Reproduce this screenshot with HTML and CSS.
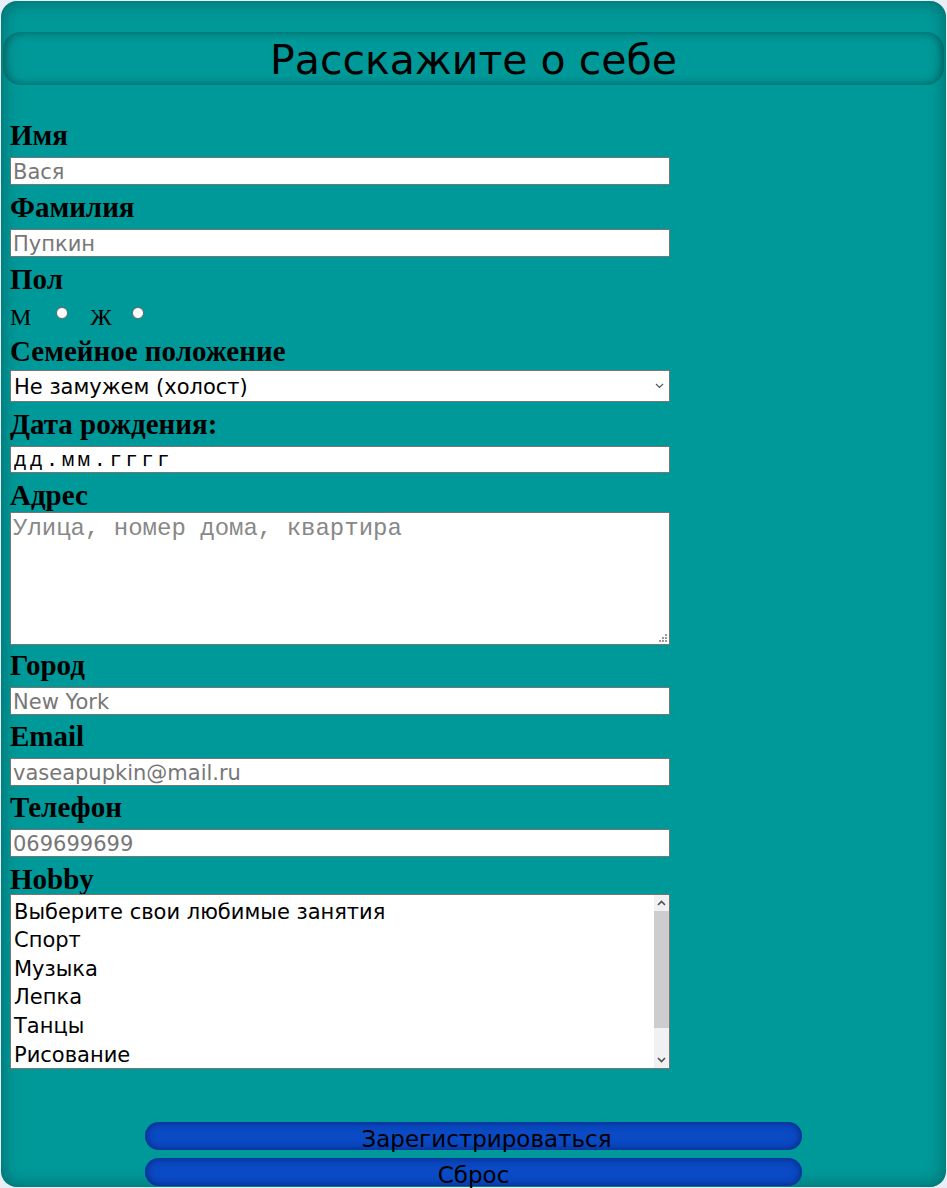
FILE: index.html
```html
<!DOCTYPE html>
<html lang="ru">
<head>
<meta charset="utf-8">
<title>Регистрация</title>
<link rel="stylesheet" href="styles.css">
</head>
<body>
<div class="page">
  <h1 class="title">Расскажите о себе</h1>
  <form class="form">
    <label class="lbl">Имя</label>
    <input class="field" type="text" placeholder="Вася">
    <label class="lbl">Фамилия</label>
    <input class="field" type="text" placeholder="Пупкин">
    <label class="lbl">Пол</label>
    <div class="gender">
      <span class="g-txt">М</span><input class="radio" type="radio" name="sex">
      <span class="g-txt g-f">Ж</span><input class="radio radio-f" type="radio" name="sex">
    </div>
    <label class="lbl">Семейное положение</label>
    <div class="select-wrap">
      <select class="field select">
        <option>Не замужем (холост)</option>
        <option>Замужем (женат)</option>
      </select>
      <svg class="chev" width="9" height="6" viewBox="0 0 9 6"><path d="M1 1l3.5 3.5L8 1" fill="none" stroke="#555" stroke-width="1.2"/></svg>
    </div>
    <label class="lbl">Дата рождения:</label>
    <input class="field date" type="text" placeholder="дд.мм.гггг">
    <label class="lbl">Адрес</label>
    <div class="area-wrap">
      <textarea class="field area" placeholder="Улица, номер дома, квартира"></textarea>
      <svg class="grip" width="8" height="8" viewBox="0 0 8 8"><g fill="#9a9a9a"><rect x="6" y="0" width="2" height="2"/><rect x="3" y="3" width="2" height="2"/><rect x="6" y="3" width="2" height="2"/><rect x="0" y="6" width="2" height="2"/><rect x="3" y="6" width="2" height="2"/><rect x="6" y="6" width="2" height="2"/></g></svg>
    </div>
    <label class="lbl lbl-city">Город</label>
    <input class="field" type="text" placeholder="New York">
    <label class="lbl lbl-tight">Email</label>
    <input class="field" type="email" placeholder="vaseapupkin@mail.ru">
    <label class="lbl lbl-tight">Телефон</label>
    <input class="field" type="tel" placeholder="069699699">
    <label class="lbl">Hobby</label>
    <div class="hobby-wrap">
      <select class="field hobby" multiple size="6">
        <option>Выберите свои любимые занятия</option>
        <option>Спорт</option>
        <option>Музыка</option>
        <option>Лепка</option>
        <option>Танцы</option>
        <option>Рисование</option>
        <option>Чтение</option>
      </select>
      <div class="sbar" aria-hidden="true">
        <svg class="sb-btn" width="15" height="16" viewBox="0 0 15 16"><path d="M4 10l3.5-3.5L11 10" fill="none" stroke="#505050" stroke-width="1.6"/></svg>
        <div class="sb-track"><div class="sb-thumb"></div></div>
        <svg class="sb-btn" width="15" height="16" viewBox="0 0 15 16"><path d="M4 6l3.5 3.5L11 6" fill="none" stroke="#505050" stroke-width="1.6"/></svg>
      </div>
    </div>
  </form>
  <div class="actions">
    <button class="btn btn-reg" type="submit">Зарегистрироваться</button>
    <button class="btn" type="reset">Сброс</button>
  </div>
</div>
</body>
</html>
```

FILE: styles.css
```css
html, body {
  margin: 0;
  padding: 0;
}
body {
  background: #e9edf5;
  font-family: "DejaVu Sans", Tahoma, sans-serif;
}
.page {
  margin: 1px;
  border-radius: 16px;
  background: #009999;
  box-shadow: inset 0 0 18px rgba(0, 60, 60, 0.55);
  padding: 31px 2px 1px 2px;
}
.title {
  margin: 0;
  height: 53px;
  border-radius: 18px;
  box-shadow: inset 0 0 10px rgba(0, 50, 50, 0.6);
  font-family: "DejaVu Sans", Tahoma, sans-serif;
  font-weight: normal;
  font-size: 41px;
  line-height: 56px;
  text-align: center;
  color: #000;
}
.form {
  display: flex;
  flex-direction: column;
  align-items: flex-start;
  gap: 8px;
  padding: 36px 7px 0 7px;
}
.lbl {
  display: block;
  font-family: "Liberation Serif", "Times New Roman", serif;
  font-weight: bold;
  font-size: 29px;
  line-height: 28px;
  color: #000;
}
.lbl-tight {
  margin-top: -1px;
}
.lbl-city {
  margin-top: -2px;
}
.field {
  box-sizing: border-box;
  width: 660px;
  height: 28px;
  margin: 0;
  border: 1px solid #767676;
  border-radius: 0;
  padding: 2px 2px 0;
  background: #fff;
  font-family: "DejaVu Sans", Tahoma, sans-serif;
  font-size: 21px;
  color: #000;
  outline: none;
}
.field::placeholder {
  color: #777;
  opacity: 1;
}
.gender {
  display: flex;
  align-items: center;
  height: 28px;
  font-family: "Liberation Serif", "Times New Roman", serif;
  font-size: 24px;
}
.g-txt {
  line-height: 28px;
  padding-top: 4px;
}
.g-f {
  margin-left: 22px;
}
.radio {
  appearance: none;
  -webkit-appearance: none;
  width: 12px;
  height: 12px;
  margin: 0 0 0 25px;
  border: 1px solid #666;
  border-radius: 50%;
  background: #fff;
  box-sizing: border-box;
  position: relative;
  top: -2px;
}
.radio-f {
  margin-left: 20px;
}
.select-wrap {
  position: relative;
  margin-top: -3px;
}
.select {
  appearance: none;
  -webkit-appearance: none;
  height: 32px;
  padding: 1px 20px 0 3px;
  color: #000;
}
.chev {
  position: absolute;
  right: 6px;
  top: 13px;
}
.date {
  height: 27px;
  font-family: "Liberation Mono", "Courier New", monospace;
  font-size: 21px;
  letter-spacing: 3.3px;
  padding: 2px 0 0 3px;
}
.date::placeholder {
  color: #000;
}
.area-wrap {
  position: relative;
  margin-top: -5px;
  line-height: 0;
}
.area {
  display: block;
  height: 133px;
  resize: none;
  font-family: "Liberation Mono", "Courier New", monospace;
  font-size: 24px;
  line-height: 1.15;
  padding: 2px 2px 0;
}
.area::placeholder {
  color: #888;
}
.grip {
  position: absolute;
  right: 3px;
  bottom: 3px;
}
.hobby-wrap {
  position: relative;
  margin-top: -7px;
  line-height: 0;
}
.hobby {
  display: block;
  height: 175px;
  padding: 3px 0 0;
  overflow-y: hidden;
}
.hobby option {
  padding: 1.7px 3px;
  font-size: 21px;
  color: #000;
}
.sbar {
  position: absolute;
  top: 1px;
  right: 1px;
  bottom: 1px;
  width: 15px;
  display: flex;
  flex-direction: column;
  background: #f1f1f1;
}
.sb-btn {
  display: block;
  flex: none;
}
.sb-track {
  flex: 1;
  padding-bottom: 24px;
  display: flex;
  flex-direction: column;
}
.sb-thumb {
  flex: 1;
  background: #cdcdcd;
}
.actions {
  display: flex;
  flex-direction: column;
  align-items: center;
  gap: 8px;
  margin-top: 53px;
}
.btn {
  box-sizing: border-box;
  width: 657px;
  height: 28px;
  margin: 0;
  border: none;
  border-radius: 14px;
  background: #0a4ac4;
  box-shadow: inset 0 0 8px rgba(0, 20, 90, 0.75);
  font-family: "DejaVu Sans", Tahoma, sans-serif;
  font-size: 23px;
  line-height: 28px;
  padding: 3px 0 0;
  color: #000;
}
.btn-reg {
  padding-left: 26px;
}
```
